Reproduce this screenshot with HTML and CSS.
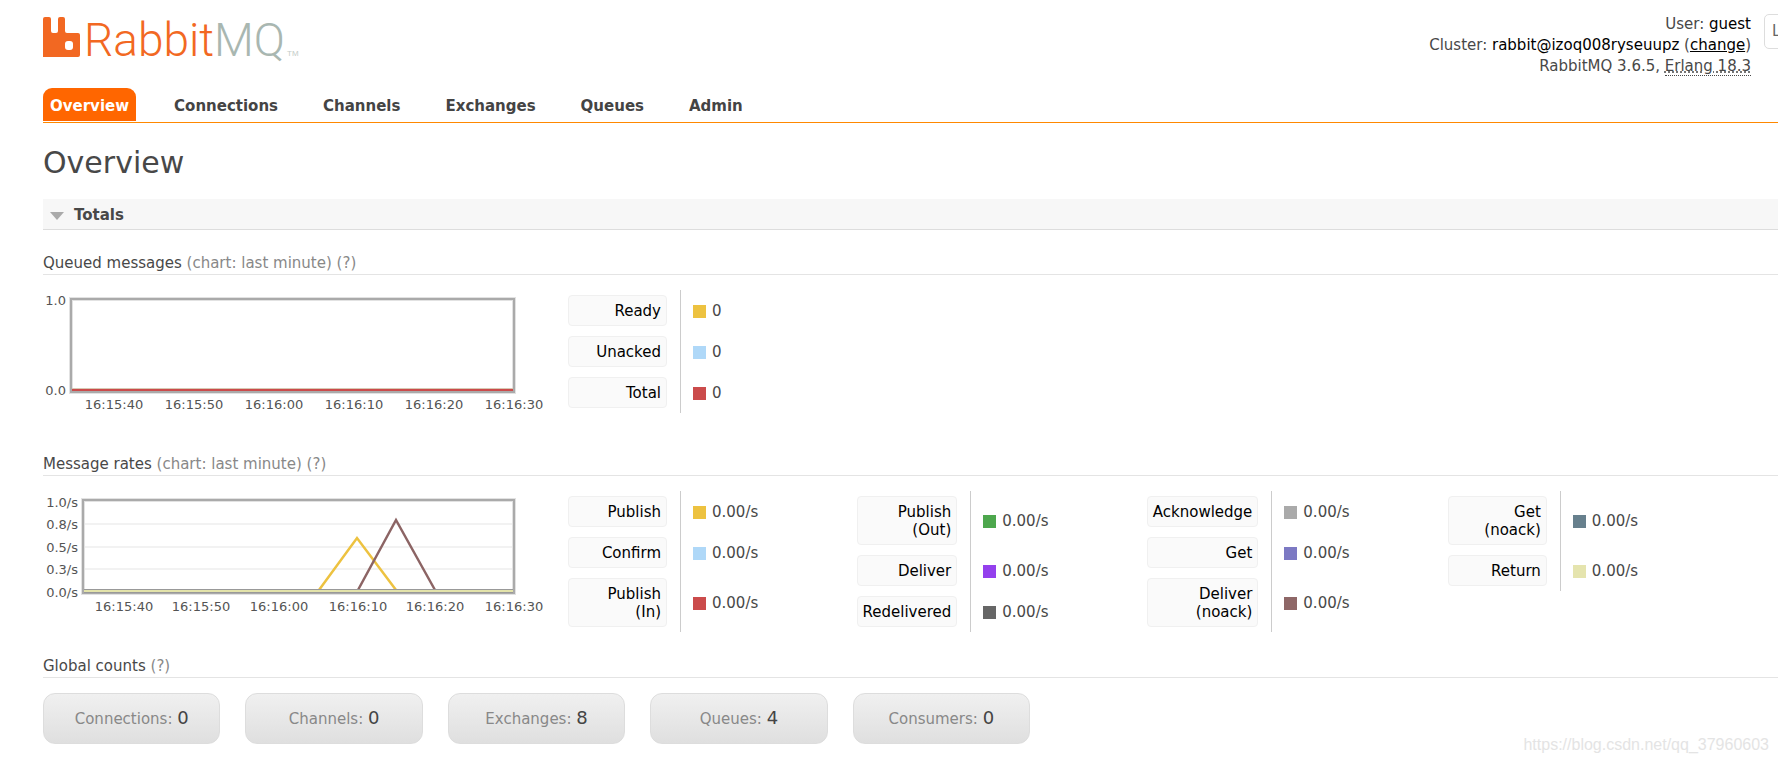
FILE: index.html
```html
<!DOCTYPE html>
<html lang="en">
<head>
<meta charset="utf-8">
<title>RabbitMQ Management</title>
<link rel="stylesheet" href="styles.css">
</head>
<body>
<div class="page">
  <header class="top">
    <a class="logo" href="#" aria-label="RabbitMQ">
      <svg width="270" height="48" viewBox="0 0 270 48">
        <path fill="#f26822" d="M0 5Q0 3 2 3H6Q8 3 8 5V17Q8 19 10 19H13Q15 19 15 17V5Q15 3 17 3H20Q22 3 22 5V17Q22 19 24 19H35Q37 19 37 21V41Q37 43 35 43H0Z"/>
        <rect x="22" y="27" width="8" height="9" rx="3" fill="#fff"/>
        <text class="wordmark" x="41" y="42"><tspan fill="#f26822">Rabbit</tspan><tspan fill="#a9b7b1">MQ</tspan></text>
        <text class="trademark" x="244" y="42">TM</text>
      </svg>
    </a>
    <div class="session">
      <ul class="status">
        <li>User: <b>guest</b></li>
        <li>Cluster: <b>rabbit@izoq008ryseuupz</b> (<a href="#">change</a>)</li>
        <li>RabbitMQ 3.6.5, <abbr title="Erlang/OTP 18">Erlang 18.3</abbr></li>
      </ul>
      <div class="logout"><button type="button">Log out</button></div>
    </div>
  </header>
  <nav class="tabs">
    <a class="active" href="#">Overview</a>
    <a href="#">Connections</a>
    <a href="#">Channels</a>
    <a href="#">Exchanges</a>
    <a href="#">Queues</a>
    <a href="#">Admin</a>
  </nav>
  <main>
    <h1>Overview</h1>
    <h2><svg width="14" height="8" viewBox="0 0 14 8"><path d="M0 0H14L7 8Z" fill="#aaa"/></svg>Totals</h2>

    <h3>Queued messages <span>(chart: last minute) <a href="#">(?)</a></span></h3>
    <div class="row">
      <svg class="chart" width="519" height="125" viewBox="0 0 519 125">
        <rect class="halo" x="28" y="9" width="443" height="93"/>
        <rect class="frame" x="28" y="9" width="443" height="93"/>
        <path d="M29 100H470" stroke="#cb4b4b" stroke-width="2"/>
        <path d="M29 98.500H470" stroke="#d8c8b4"/>
        <g text-anchor="end"><text x="23" y="15">1.0</text><text x="23" y="105">0.0</text></g>
        <g text-anchor="middle">
          <text x="71" y="119">16:15:40</text><text x="151" y="119">16:15:50</text><text x="231" y="119">16:16:00</text>
          <text x="311" y="119">16:16:10</text><text x="391" y="119">16:16:20</text><text x="471" y="119">16:16:30</text>
        </g>
      </svg>
      <table class="legend">
        <tr><th><button type="button">Ready</button></th><td><i class="yellow"></i>0</td></tr>
        <tr><th><button type="button">Unacked</button></th><td><i class="sky"></i>0</td></tr>
        <tr><th><button type="button">Total</button></th><td><i class="red"></i>0</td></tr>
      </table>
    </div>

    <h3>Message rates <span>(chart: last minute) <a href="#">(?)</a></span></h3>
    <div class="row">
      <svg class="chart" width="519" height="125" viewBox="0 0 519 125">
        <path d="M41 33H470M41 56H470M41 78H470" stroke="#f2f2f2" stroke-width="2"/>
        <rect class="halo" x="40" y="9" width="431" height="93"/>
        <rect class="frame" x="40" y="9" width="431" height="93"/>
        <path d="M276 99L314 47L353 99" fill="none" stroke="#edc240" stroke-width="2.500"/>
        <path d="M315 99L353 29L392 99" fill="none" stroke="#8c6464" stroke-width="2.500"/>
        <path d="M41 100H470" stroke="#999" stroke-width="4"/>
        <path d="M41 100H470" stroke="#e3e3aa" stroke-width="2"/>
        <g text-anchor="end">
          <text x="35" y="16">1.0/s</text><text x="35" y="38">0.8/s</text><text x="35" y="61">0.5/s</text>
          <text x="35" y="83">0.3/s</text><text x="35" y="106">0.0/s</text>
        </g>
        <g text-anchor="middle">
          <text x="81" y="120">16:15:40</text><text x="158" y="120">16:15:50</text><text x="236" y="120">16:16:00</text>
          <text x="315" y="120">16:16:10</text><text x="392" y="120">16:16:20</text><text x="471" y="120">16:16:30</text>
        </g>
      </svg>
      <table class="legend">
        <tr><th><button type="button">Publish</button></th><td><i class="yellow"></i>0.00/s</td></tr>
        <tr><th><button type="button">Confirm</button></th><td><i class="sky"></i>0.00/s</td></tr>
        <tr><th><button type="button">Publish<br>(In)</button></th><td><i class="red"></i>0.00/s</td></tr>
      </table>
      <table class="legend">
        <tr><th><button type="button">Publish<br>(Out)</button></th><td><i class="green"></i>0.00/s</td></tr>
        <tr><th><button type="button">Deliver</button></th><td><i class="purple"></i>0.00/s</td></tr>
        <tr><th><button type="button">Redelivered</button></th><td><i class="dark"></i>0.00/s</td></tr>
      </table>
      <table class="legend">
        <tr><th><button type="button">Acknowledge</button></th><td><i class="gray"></i>0.00/s</td></tr>
        <tr><th><button type="button">Get</button></th><td><i class="violet"></i>0.00/s</td></tr>
        <tr><th><button type="button">Deliver<br>(noack)</button></th><td><i class="brown"></i>0.00/s</td></tr>
      </table>
      <table class="legend">
        <tr><th><button type="button">Get<br>(noack)</button></th><td><i class="slate"></i>0.00/s</td></tr>
        <tr><th><button type="button">Return</button></th><td><i class="cream"></i>0.00/s</td></tr>
      </table>
    </div>

    <h3>Global counts <span><a href="#">(?)</a></span></h3>
    <div class="counts">
      <a href="#">Connections: <strong>0</strong></a>
      <a href="#">Channels: <strong>0</strong></a>
      <a href="#">Exchanges: <strong>8</strong></a>
      <a href="#">Queues: <strong>4</strong></a>
      <a href="#">Consumers: <strong>0</strong></a>
    </div>
  </main>
  <div class="watermark">https://blog.csdn.net/qq_37960603</div>
</div>
</body>
</html>
```
FILE: styles.css
```css
* { box-sizing: border-box; }
body {
  margin: 0;
  background: #fff;
  color: #484848;
  font: 15px/21px Verdana, "DejaVu Sans", sans-serif;
}
button { font: inherit; cursor: pointer; }
.page {
  position: relative;
  min-height: 100vh;
  padding-left: 43px;
  overflow: hidden;
}

.top { display: flex; justify-content: space-between; height: 88px; padding-top: 14px; }
.logo svg { display: block; }
.wordmark { font: 300 46px Roboto, sans-serif; }
.trademark { font: 8px "Liberation Sans", sans-serif; fill: #c4ccc8; }
.session { display: flex; align-items: flex-start; gap: 13px; }
.status { margin: 0; padding: 0; list-style: none; text-align: right; }
.status b { color: #000; font-weight: normal; }
.status a { color: #000; }
.status abbr { text-decoration: underline dotted; border-bottom: 1px dotted #484848; }
.logout { width: 14px; }
.logout button {
  padding: 6px 7px;
  border: 1px solid #ddd;
  border-radius: 5px;
  background: #fff;
  color: #666;
  white-space: nowrap;
}

.tabs { display: flex; gap: 31px; padding-bottom: 1px; border-bottom: 1px solid #f80; }
.tabs a {
  padding: 8px 7px 4px;
  border-radius: 9px 9px 0 0;
  color: #444;
  font-weight: bold;
  text-decoration: none;
}
.tabs a.active { background: #f60; color: #fff; }

h1 { margin: 22px 0 18px; font-size: 30px; line-height: 36px; font-weight: normal; }
h2 {
  display: flex;
  align-items: center;
  gap: 10px;
  margin: 0 0 22px;
  padding: 6px 7px 3px;
  border-bottom: 1px solid #ddd;
  background: #f7f7f7;
  font-size: 15px;
  line-height: 21px;
}
h3 {
  margin: 0 0 15px;
  padding-top: 1px;
  border-bottom: 1px solid #e4e4e4;
  font-size: 15px;
  line-height: 21px;
  font-weight: normal;
}
h3 span, h3 a { color: #888; text-decoration: none; }

.row { display: flex; align-items: flex-start; min-height: 140px; margin-bottom: 23px; }
.chart { flex: none; font-size: 13px; fill: #545454; }
.chart .frame { fill: none; stroke: #aaa; stroke-width: 2; }
.chart .halo { fill: none; stroke: #e2e2e2; stroke-width: 4; }

.legend { margin-right: 46px; border-collapse: collapse; }
.legend th { padding: 5px 13px 5px 6px; border-right: 1px solid #ccc; font-weight: normal; }
.legend td { width: 124px; padding: 1px 0 0 12px; white-space: nowrap; }
.legend button {
  display: block;
  width: 100%;
  min-width: 99px;
  padding: 6px 5px 5px;
  border: 1px solid #f0f0f0;
  border-radius: 4px;
  background: #fafafa;
  color: #000;
  line-height: 18px;
  text-align: right;
}
.legend i {
  display: inline-block;
  width: 13px;
  height: 13px;
  margin-right: 6px;
  vertical-align: -2px;
}
.yellow { background: #edc240; }
.sky { background: #afd8f8; }
.red { background: #cb4b4b; }
.green { background: #4da74d; }
.purple { background: #9440ed; }
.dark { background: #666; }
.gray { background: #aaa; }
.violet { background: #7c79c3; }
.brown { background: #8e6767; }
.slate { background: #67808d; }
.cream { background: #e5e4ae; }

.counts { display: flex; gap: 25px; max-width: 987px; }
.counts a {
  flex: 1;
  padding: 13px 0;
  border: 1px solid #ddd;
  border-radius: 12px;
  background: linear-gradient(#f0f0f0, #dfdfdf);
  color: #888;
  text-align: center;
  text-decoration: none;
}
.counts strong { color: #444; font-size: 18px; font-weight: normal; }

.watermark {
  position: absolute;
  right: 9px;
  bottom: 8px;
  color: #e4e4e4;
  font: 16px/21px "Liberation Sans", sans-serif;
}
```
